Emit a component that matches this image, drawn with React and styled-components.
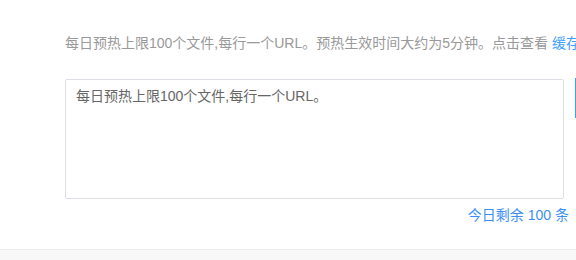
import React from "react";
import styled, { createGlobalStyle } from "styled-components";

const Global = createGlobalStyle`
  html, body { margin: 0; padding: 0; background: #fff; overflow: hidden; }
  body { font-family: "Liberation Sans", "Noto Sans CJK SC", sans-serif; }
`;

const Page = styled.div`
  width: 576px;
  height: 260px;
  display: flex;
  flex-direction: column;
  overflow: hidden;
  background: #fff;
`;

const Panel = styled.div`
  flex: 0 0 249px;
  box-sizing: border-box;
  padding: 34px 0 0 65px;
  display: flex;
  flex-direction: column;
`;

const Tip = styled.div`
  font-size: 14px;
  line-height: 18px;
  color: #999;
  white-space: nowrap;
`;

const Link = styled.a`
  color: #409eff;
  text-decoration: none;
  cursor: pointer;
`;

const InputRow = styled.div`
  display: flex;
  align-items: flex-start;
  gap: 11px;
  margin-top: 27px;
`;

const Area = styled.textarea`
  flex: 0 0 auto;
  box-sizing: border-box;
  width: 499px;
  height: 120px;
  border: 1px solid #dcdfe6;
  border-radius: 2px;
  padding: 7px 10px;
  font-family: "Liberation Sans", "Noto Sans CJK SC", sans-serif;
  font-size: 14px;
  line-height: 18px;
  color: #606266;
  resize: none;
  outline: none;
  &::placeholder { color: #666; }
`;

const Submit = styled.button`
  flex: 0 0 auto;
  width: 80px;
  height: 40px;
  background: #409eff;
  border: 0;
  border-radius: 0;
  margin-top: -1px;
  padding: 0;
`;

const Counter = styled.div`
  width: 504px;
  text-align: right;
  margin-top: 7px;
  font-size: 14px;
  line-height: 18px;
  color: #3c8ff0;
`;

const Footer = styled.div`
  flex: 1;
  border-top: 1px solid #ebebeb;
  background: #f8f8f8;
`;

export default function App() {
  return (
    <Page>
      <Global />
      <Panel>
        <Tip>
          每日预热上限100个文件,每行一个URL。预热生效时间大约为5分钟。点击查看 <Link>缓存预热记录</Link>
        </Tip>
        <InputRow>
          <Area placeholder="每日预热上限100个文件,每行一个URL。" />
          <Submit aria-label="提交" />
        </InputRow>
        <Counter>今日剩余 100 条</Counter>
      </Panel>
      <Footer />
    </Page>
  );
}
